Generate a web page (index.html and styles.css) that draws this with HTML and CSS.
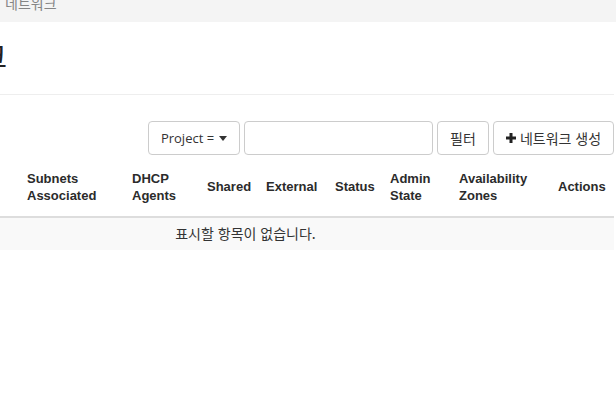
FILE: index.html
```html
<!DOCTYPE html>
<html lang="ko">
<head>
<meta charset="utf-8">
<link rel="stylesheet" href="styles.css">
</head>
<body>
<div class="crumb"><span>네트워크</span></div>
<div class="page">
  <div class="page-header"><h1>네트워크</h1></div>
  <div class="toolbar">
    <button class="btn btn-project">Project = <span class="caret"></span></button>
    <input class="search" type="text">
    <button class="btn btn-filter">필터</button>
    <button class="btn btn-create"><svg class="plus" viewBox="0 0 10 10" width="10" height="10"><path d="M3.5 0h3v3.5H10v3H6.5V10h-3V6.5H0v-3h3.5z"/></svg>네트워크 생성</button>
  </div>
  <table class="grid">
    <colgroup>
      <col class="c-hidden">
      <col class="c-subnets">
      <col class="c-dhcp">
      <col class="c-shared">
      <col class="c-external">
      <col class="c-status">
      <col class="c-admin">
      <col class="c-az">
      <col class="c-actions">
    </colgroup>
    <thead>
      <tr>
        <th>Name</th>
        <th>Subnets<br>Associated</th>
        <th>DHCP<br>Agents</th>
        <th>Shared</th>
        <th>External</th>
        <th>Status</th>
        <th>Admin<br>State</th>
        <th>Availability<br>Zones</th>
        <th>Actions</th>
      </tr>
    </thead>
    <tbody>
      <tr class="empty"><td colspan="9">표시할 항목이 없습니다.</td></tr>
    </tbody>
  </table>
</div>
</body>
</html>
```
FILE: styles.css
```css
html, body {
  margin: 0;
  padding: 0;
  background: #fff;
  overflow: hidden;
  width: 616px;
  height: 399px;
}
body {
  font-family: "Noto Sans CJK KR", "Noto Sans", sans-serif;
  font-size: 13px;
  color: #333;
}
.crumb {
  height: 22px;
  background: #f4f4f4;
  padding-left: 5px;
  overflow: hidden;
}
.crumb span {
  display: block;
  line-height: 20px;
  margin-top: -7px;
  font-size: 14px;
  color: #858585;
}
.page {
  width: 737px;
  margin-left: -123px;
}
.page-header {
  height: 72px;
  border-bottom: 1px solid #eee;
  display: flex;
  align-items: flex-start;
}
.page-header h1 {
  margin: 0;
  width: 130px;
  padding-top: 13px;
  text-align: right;
  font-size: 30px;
  font-weight: 400;
  line-height: 40px;
  color: #222;
  white-space: nowrap;
}
.toolbar {
  display: flex;
  justify-content: flex-end;
  gap: 4px;
  margin-top: 26px;
  height: 34px;
}
.btn {
  height: 34px;
  box-sizing: border-box;
  background: #fff;
  border: 1px solid #ccc;
  border-radius: 4px;
  font-family: "Noto Sans CJK KR", "Open Sans", sans-serif;
  font-size: 14px;
  color: #333;
  padding: 0 8px;
  display: flex;
  align-items: center;
  justify-content: center;
}
.btn-project { width: 92px; font-size: 13px; font-family: "Open Sans", "Noto Sans CJK KR", sans-serif; }
.caret {
  display: inline-block;
  width: 0;
  height: 0;
  border-left: 4px solid transparent;
  border-right: 4px solid transparent;
  border-top: 5px solid #333;
  margin-left: 5px;
}
.search {
  width: 189px;
  height: 34px;
  box-sizing: border-box;
  border: 1px solid #ccc;
  border-radius: 4px;
  margin: 0;
}
.btn-filter { width: 52px; }
.btn-create { width: 121px; }
.plus { fill: #222; margin-right: 4px; }
.grid {
  width: 737px;
  margin-top: 4px;
  border-collapse: collapse;
  table-layout: fixed;
}
.c-hidden { width: 142px; }
.c-subnets { width: 105px; }
.c-dhcp { width: 75px; }
.c-shared { width: 59px; }
.c-external { width: 69px; }
.c-status { width: 55px; }
.c-admin { width: 69px; }
.c-az { width: 99px; }
.c-actions { width: 64px; }
.grid th {
  font-family: "Liberation Sans", Arial, sans-serif;
  font-weight: 700;
  font-size: 13px;
  line-height: 17px;
  color: #2b2b2b;
  text-align: left;
  vertical-align: middle;
  padding: 9px 8px 11px;
  height: 37px;
  border-bottom: 2px solid #ddd;
}
.empty td {
  background: #f9f9f9;
  text-align: center;
  vertical-align: top;
  height: 33px;
  box-sizing: border-box;
  padding: 5px 8px 0;
  font-size: 14px;
  line-height: 20px;
  color: #333;
}
```
